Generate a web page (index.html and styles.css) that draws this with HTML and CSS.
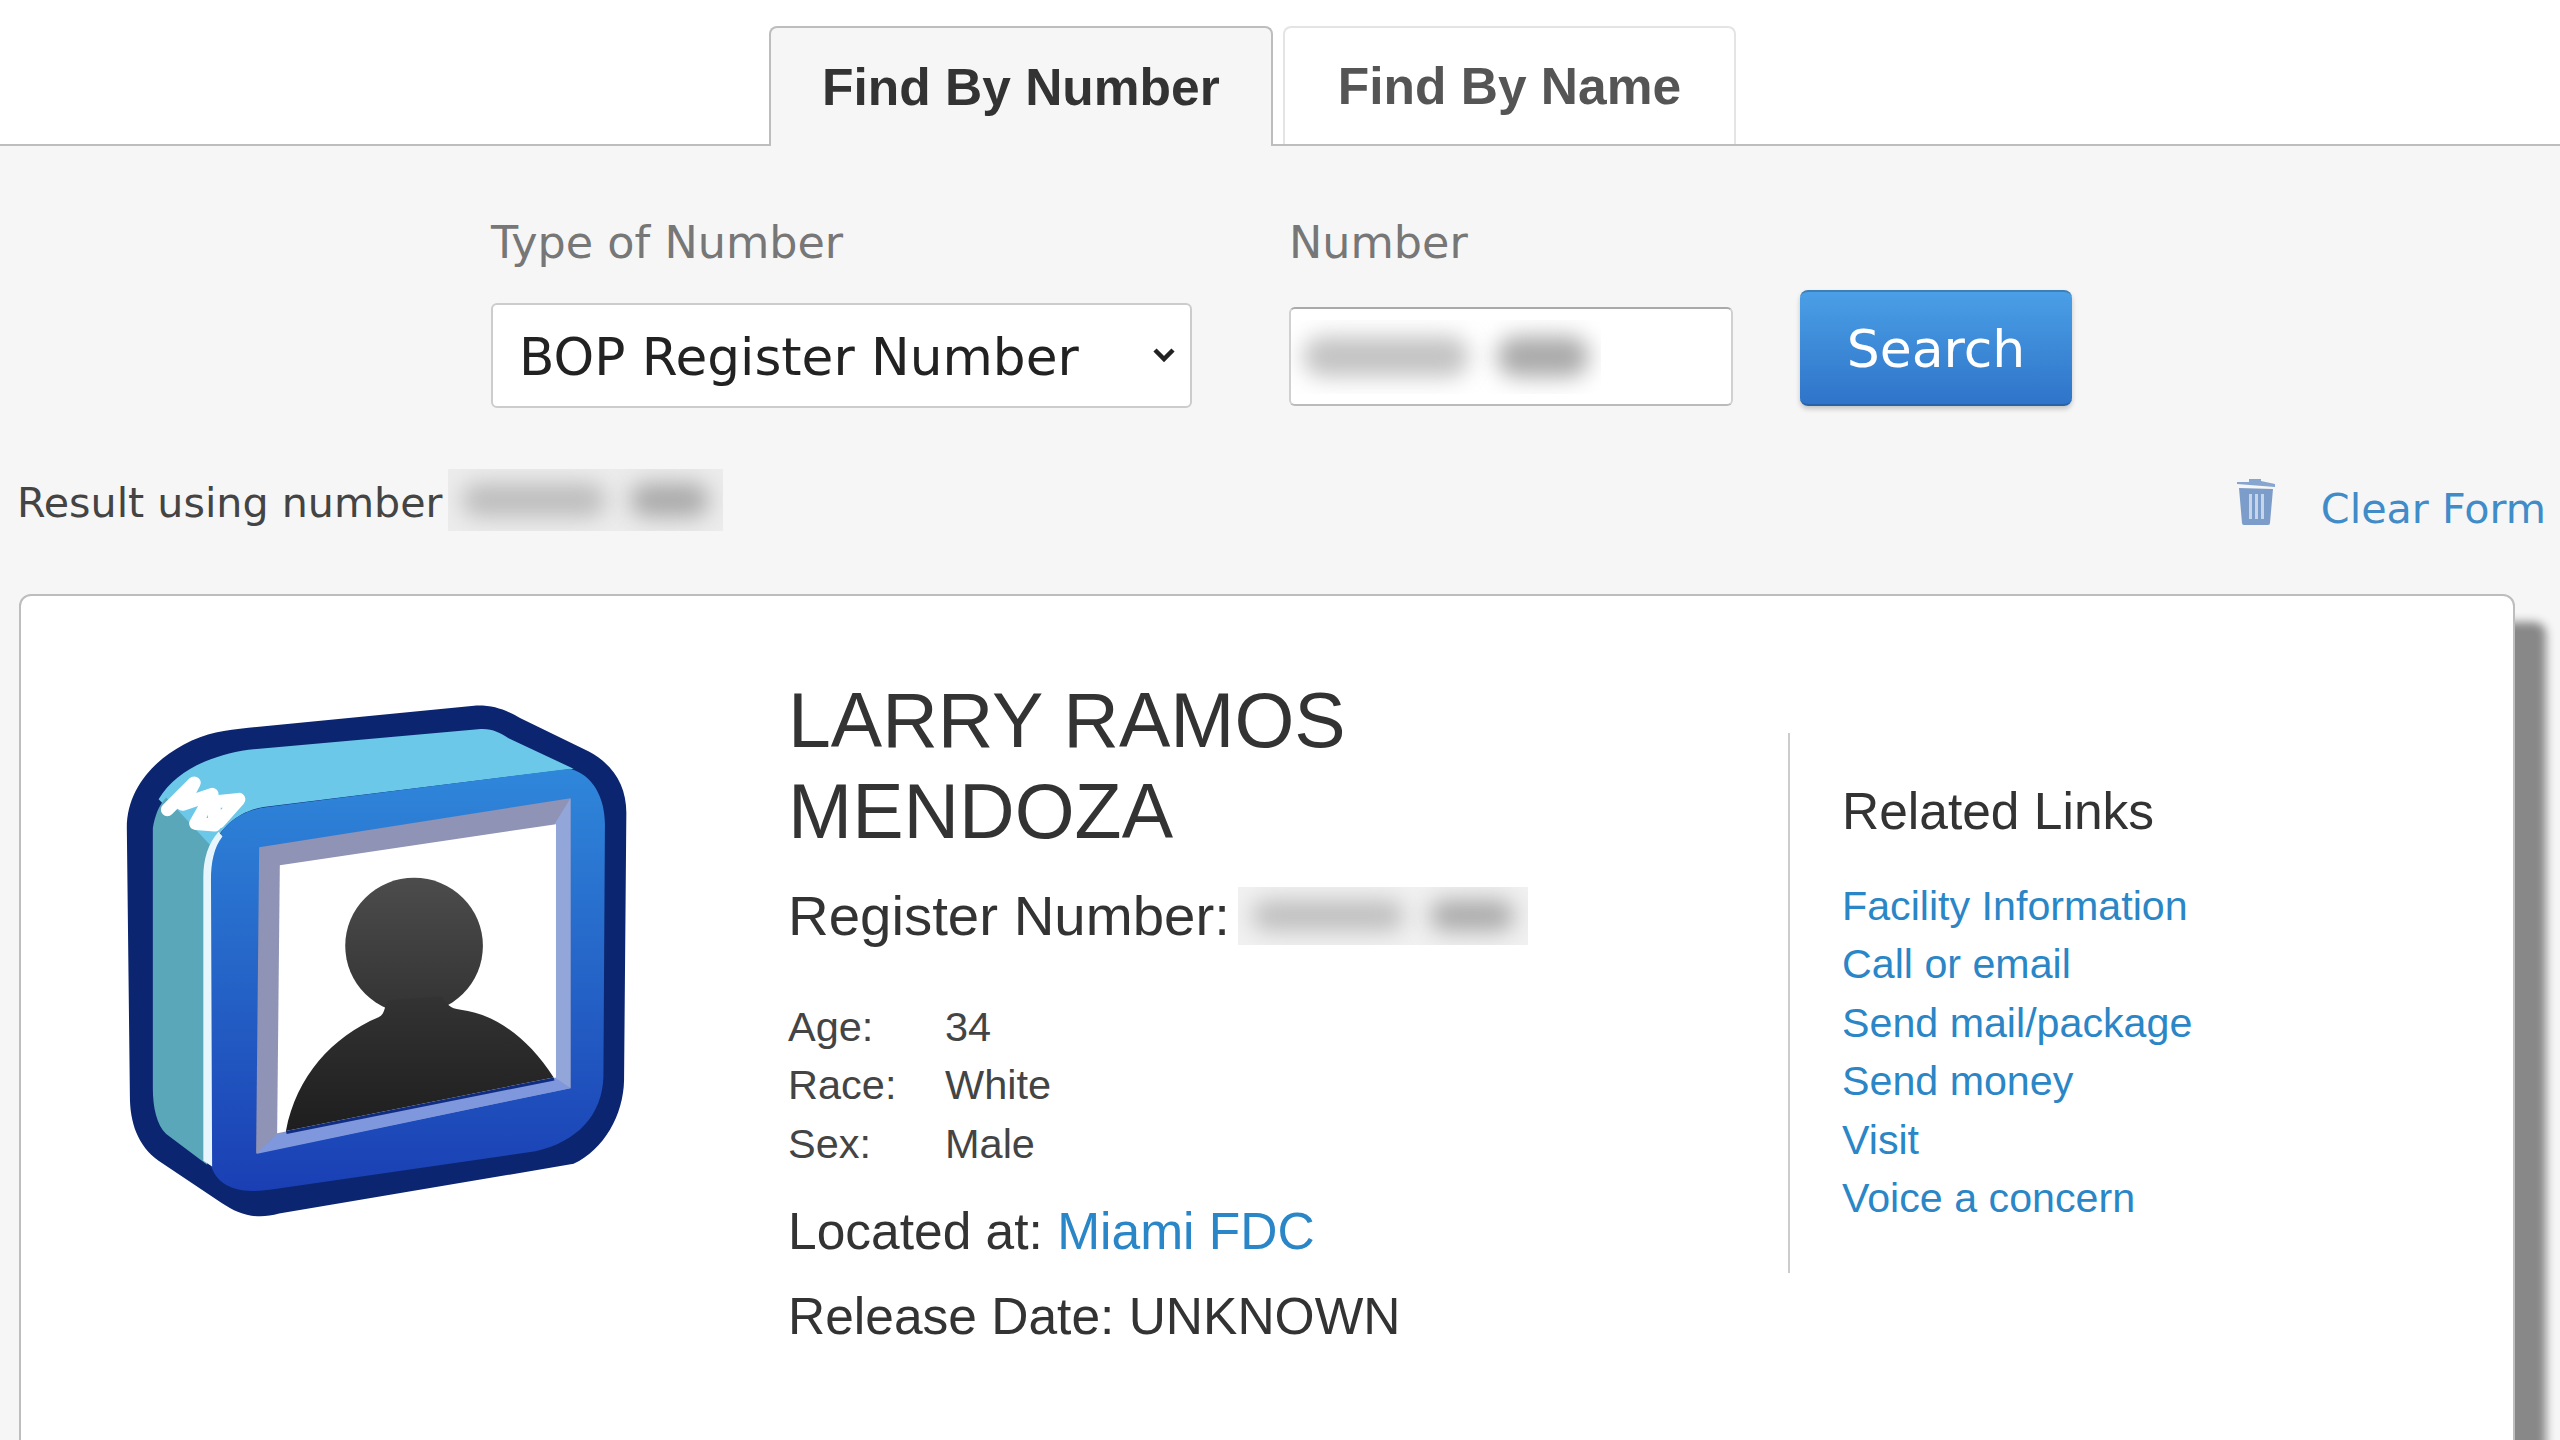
FILE: index.html
```html
<!DOCTYPE html>
<html lang="en">
<head>
  <meta charset="UTF-8">
  <meta name="viewport" content="width=device-width, initial-scale=1.0">
  <title>Find By Number</title>
  <link rel="stylesheet" href="styles.css">
</head>

<body>
  <nav class="tabs">
    <a class="tab tab-active" href="#">Find By Number</a>
    <a class="tab" href="#">Find By Name</a>
  </nav>

  <form class="search-form">
    <div class="field field-type">
      <label for="number-type">Type of Number</label>
      <div class="select-wrap">
        <select id="number-type">
          <option>BOP Register Number</option>
        </select>
        <svg class="select-arrow" viewBox="0 0 24 16" aria-hidden="true">
          <path d="M3 3l9 9 9-9" fill="none" stroke="#222" stroke-width="4.500"/>
        </svg>
      </div>
    </div>
    <div class="field field-number">
      <label>Number</label>
      <div class="number-input">
        <span class="blur-wrap blur-input"><i class="blob blob-long"></i><i class="blob blob-short"></i></span>
      </div>
    </div>
    <button class="search-btn" type="button">Search</button>
  </form>

  <div class="result-row">
    <div class="result-text">
      <span>Result using number</span>
      <span class="blur-wrap blur-result"><i class="blob blob-long"></i><i class="blob blob-short"></i></span>
    </div>
    <a class="clear-link" href="#">
      <svg class="trash-icon" viewBox="0 0 38 46" aria-hidden="true">
        <path d="M12 0h12v2l14 3v3L0 5V3h12z" fill="#86a6cf"/>
        <path d="M2 9l34 1-3 34a2 2 0 0 1-2 2H7a2 2 0 0 1-2-2z" fill="#7c9dc9"/>
        <path d="M12 15h3v25h-3zM18 15h3v25h-3zM24 15h3v25h-3z" fill="#c6d5e8"/>
      </svg>
      <span>Clear Form</span>
    </a>
  </div>

  <section class="card">
    <svg class="inmate-logo" viewBox="110 100 1340 1370" aria-hidden="true">
      <defs>
        <linearGradient id="front-grad" x1="0" y1="0" x2="0" y2="1">
          <stop offset="0" stop-color="#2f87da"/>
          <stop offset="1" stop-color="#1a3fb4"/>
        </linearGradient>
        <linearGradient id="head-grad" x1="0" y1="0" x2="0" y2="1">
          <stop offset="0" stop-color="#4c4c4c"/>
          <stop offset="1" stop-color="#333"/>
        </linearGradient>
        <linearGradient id="body-grad" x1="0" y1="0" x2="0" y2="1">
          <stop offset="0" stop-color="#333"/>
          <stop offset="1" stop-color="#1e1e1e"/>
        </linearGradient>
      </defs>
      <path d="M270 222C330 190 380 185 440 178L1030 120C1080 118 1110 130 1150 152L1330 240C1395 275 1428 330 1428 400L1422 1100C1420 1190 1370 1280 1290 1318L520 1448C460 1465 415 1450 370 1420L205 1310C150 1270 130 1210 130 1140L122 440C122 340 190 265 270 222Z" fill="#0b2570"/>
      <path d="M205 365C250 290 340 250 440 235L1040 182C1075 178 1095 190 1120 205L1290 285L480 385C420 395 370 430 340 500Z" fill="#6cc8e8"/>
      <path d="M190 440C195 410 205 380 225 360L345 490C335 520 330 560 330 600L332 1320L225 1240C200 1215 190 1170 190 1120Z" fill="#5aa7ba"/>
      <path d="M338 560C342 440 410 395 490 385L1280 285C1340 300 1372 360 1372 430L1368 1090C1365 1190 1300 1260 1190 1285L500 1385C400 1400 345 1370 338 1300Z" fill="url(#front-grad)"/>
      <path d="M322 1310V570C322 520 335 480 362 450L372 462C350 490 342 530 342 575L345 1325Z" fill="#e6f6fc"/>
      <path d="M228 392L298 322L268 378L345 352L302 428L352 432L350 372L415 365L362 425" fill="none" stroke="#fff" stroke-width="34" stroke-linecap="round" stroke-linejoin="round"/>
      <path d="M468 490L1282 362V1120L460 1290Z" fill="#8f93b5"/>
      <path d="M1240 430L1282 362V1120L1240 1092Z" fill="#93a6da"/>
      <path d="M460 1292L515 1240L1240 1092L1282 1120Z" fill="#7f97dc"/>
      <path d="M522 537L1244 430V1092L515 1238Z" fill="#fff"/>
      <ellipse cx="873" cy="748" rx="180" ry="178" fill="url(#head-grad)"/>
      <path d="M538 1232C565 1090 660 985 780 935C800 925 795 900 805 890L945 880C960 900 965 912 995 915C1080 925 1170 985 1238 1092Z" fill="url(#body-grad)"/>
      <path d="M538 1232L1238 1092L1240 1100L540 1240Z" fill="#0f2c80"/>
    </svg>

    <div class="details">
      <h1>LARRY RAMOS MENDOZA</h1>
      <div class="register-line">
        <span>Register Number:</span>
        <span class="blur-wrap blur-register"><i class="blob blob-long"></i><i class="blob blob-short"></i></span>
      </div>
      <div class="facts">
        <div class="fact"><span class="fact-label">Age:</span><span>34</span></div>
        <div class="fact"><span class="fact-label">Race:</span><span>White</span></div>
        <div class="fact"><span class="fact-label">Sex:</span><span>Male</span></div>
      </div>
      <p class="located">Located at: <a href="#">Miami FDC</a></p>
      <p class="release">Release Date: UNKNOWN</p>
    </div>

    <aside class="related">
      <h3>Related Links</h3>
      <ul>
        <li><a href="#">Facility Information</a></li>
        <li><a href="#">Call or email</a></li>
        <li><a href="#">Send mail/package</a></li>
        <li><a href="#">Send money</a></li>
        <li><a href="#">Visit</a></li>
        <li><a href="#">Voice a concern</a></li>
      </ul>
    </aside>
  </section>
</body>
</html>
```

FILE: styles.css
```css
html, body {
  height: 1440px;
  overflow: hidden;
}

body {
  margin: 0;
  font-family: "Liberation Sans", Arial, sans-serif;
  background-color: #f6f6f6;
  color: #333;
}

a {
  color: #2a86c6;
  text-decoration: none;
}

/* tabs */
.tabs {
  display: flex;
  gap: 10px;
  height: 118px;
  padding: 26px 0 0 769px;
  background-color: white;
  border-bottom: 2px solid #bdbdbd;
}

.tab {
  display: flex;
  align-items: center;
  box-sizing: border-box;
  padding: 0 53px;
  height: 118px;
  border: 2px solid #e4e4e4;
  border-bottom: none;
  border-radius: 8px 8px 0 0;
  font-size: 51.500px;
  font-weight: bold;
  color: #555;
  background-color: white;
}

.tab-active {
  height: 120px;
  padding: 0 51px;
  border-color: #bdbdbd;
  background-color: #f6f6f6;
  color: #333;
}

/* search form */
.search-form {
  display: flex;
  align-items: flex-end;
  padding-left: 491px;
  height: 262px;
}

.field label {
  display: block;
  font-family: "DejaVu Sans", sans-serif;
  font-size: 44.500px;
  line-height: 56px;
  color: #777;
}

.field-type {
  width: 701px;
  margin-right: 97px;
}

.field-type label {
  margin-bottom: 32px;
}

.select-wrap {
  position: relative;
}

.field-type select {
  display: block;
  width: 701px;
  height: 105px;
  padding: 3px 26px 0;
  font-family: "DejaVu Sans", sans-serif;
  font-size: 51.700px;
  color: #222;
  background-color: white;
  border: 2px solid #ccc;
  border-radius: 6px;
  appearance: none;
}

.select-arrow {
  position: absolute;
  right: 16px;
  top: 44px;
  width: 24px;
  height: 16px;
  pointer-events: none;
}

.field-number {
  width: 444px;
  margin-right: 67px;
  padding-bottom: 2px;
}

.field-number label {
  margin-bottom: 36px;
}

.number-input {
  display: flex;
  align-items: center;
  box-sizing: border-box;
  height: 99px;
  background-color: white;
  border: 2px solid #d0d0d0;
  border-top-color: #aaa;
  border-bottom-color: #bbb;
  border-radius: 6px;
  overflow: hidden;
}

.search-btn {
  width: 272px;
  height: 116px;
  margin-bottom: 2px;
  padding: 2px 0 0 0;
  font-family: "DejaVu Sans", sans-serif;
  font-size: 52px;
  color: white;
  background: linear-gradient(#4a9fe6, #2f74c9);
  border: none;
  border-top: 2px solid #3f7fb8;
  border-bottom: 2px solid #2a62a8;
  border-radius: 8px;
  box-shadow: 0 3px 5px rgba(0,0,0,0.2);
}

/* blurred out numbers */
.blur-wrap {
  display: inline-flex;
  align-items: center;
  justify-content: space-between;
  box-sizing: border-box;
  overflow: hidden;
}

.blob {
  display: block;
  height: 55%;
  border-radius: 20px;
  background-color: #aaa;
  filter: blur(11px);
}

.blob-long {
  width: 58%;
  opacity: 0.7;
}

.blob-short {
  width: 32%;
}

.blur-input {
  width: 310px;
  height: 74px;
  padding: 0 12px;
}

.blur-result {
  width: 275px;
  height: 62px;
  margin-bottom: 6px;
  padding: 0 14px;
  background-color: #ececec;
}

.blur-register {
  width: 290px;
  height: 58px;
  padding: 0 14px;
  background-color: #f1f1f1;
}

/* result line */
.result-row {
  display: flex;
  justify-content: space-between;
  padding: 60px 14px 0 17px;
  height: 186px;
  box-sizing: border-box;
}

.result-text {
  display: flex;
  align-items: center;
  gap: 6px;
  height: 62px;
  margin-top: 4px;
  font-family: "DejaVu Sans", sans-serif;
  font-size: 41.200px;
  color: #444;
}

.clear-link {
  display: flex;
  align-items: flex-end;
  gap: 46px;
  height: 64px;
  margin-top: 1px;
  font-family: "DejaVu Sans", sans-serif;
  font-size: 41.300px;
  color: #3f8cc8;
}

.trash-icon {
  width: 38px;
  height: 46px;
  margin-bottom: 8px;
}

/* result card */
.card {
  display: flex;
  align-items: flex-start;
  box-sizing: border-box;
  width: 2496px;
  height: 1000px;
  margin-left: 19px;
  background-color: white;
  border: 2px solid #bdbdbd;
  border-radius: 12px;
  box-shadow: 31px 28px 10px #888;
}

.inmate-logo {
  flex-shrink: 0;
  width: 513px;
  height: 524px;
  margin: 102px 153px 0 101px;
}

.details {
  flex-shrink: 0;
  box-sizing: border-box;
  width: 1000px;
  padding: 79px 0 0 0;
}

.details h1 {
  margin: 0;
  width: 700px;
  font-size: 77px;
  font-weight: normal;
  line-height: 91px;
  color: #333;
}

.register-line {
  display: flex;
  align-items: center;
  gap: 8px;
  height: 67px;
  margin-top: 25px;
  font-size: 56.400px;
}

.facts {
  margin-top: 49px;
}

.fact {
  display: flex;
  font-size: 41.500px;
  line-height: 58.400px;
  color: #444;
}

.fact-label {
  width: 157px;
}

.located,
.release {
  margin: 0;
  font-size: 51.500px;
  line-height: 62px;
}

.located {
  margin-top: 27px;
}

.release {
  margin-top: 23px;
}

.related {
  margin-top: 137px;
  padding: 47px 0 46px 52px;
  border-left: 2px solid #ccc;
}

.related h3 {
  margin: 0 0 35px 0;
  font-size: 51.500px;
  font-weight: normal;
  line-height: 62px;
}

.related ul {
  margin: 0;
  padding: 0;
  list-style: none;
}

.related li {
  font-size: 41.200px;
  line-height: 58.400px;
}
```
